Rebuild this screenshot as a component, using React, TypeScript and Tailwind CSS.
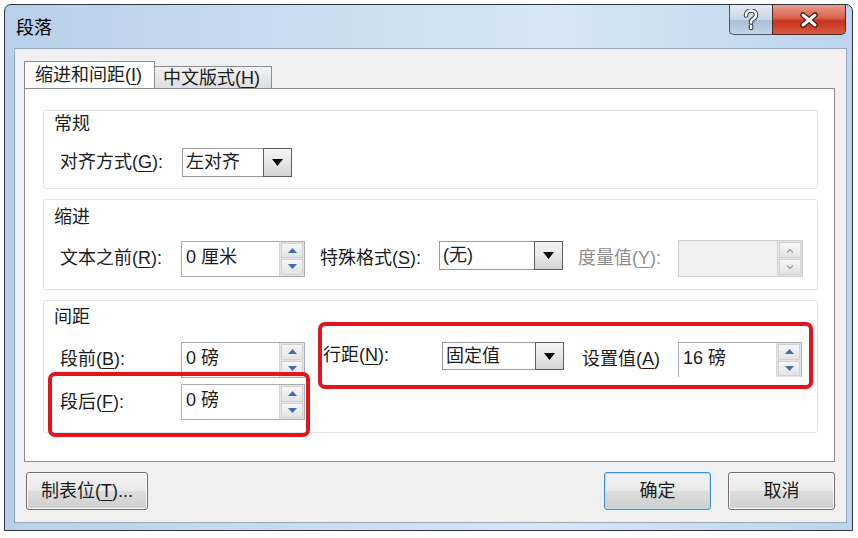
import React from 'react'

const UpTri = ({ disabled }: { disabled?: boolean }) =>
  disabled ? (
    <svg width="8" height="5" viewBox="0 0 8 5">
      <path d="M1 4.5 L4 1.5 L7 4.5" fill="none" stroke="#9a9a9a" strokeWidth="1.2" />
    </svg>
  ) : (
    <svg width="9" height="5" viewBox="0 0 9 5">
      <polygon points="0,5 4.5,0 9,5" fill="#3f6db0" />
    </svg>
  )

const DownTri = ({ disabled }: { disabled?: boolean }) =>
  disabled ? (
    <svg width="8" height="5" viewBox="0 0 8 5">
      <path d="M1 0.5 L4 3.5 L7 0.5" fill="none" stroke="#9a9a9a" strokeWidth="1.2" />
    </svg>
  ) : (
    <svg width="9" height="5" viewBox="0 0 9 5">
      <polygon points="0,0 9,0 4.5,5" fill="#3f6db0" />
    </svg>
  )

const Spin = ({ value, disabled }: { value?: string; disabled?: boolean }) => (
  <div
    className={
      disabled
        ? 'flex h-[37px] w-[125px] border border-[#cfcfcf] bg-[#f0f0f0]'
        : 'flex h-[36px] w-[124px] border border-[#abadb3] bg-white'
    }
  >
    <div className="flex-1 whitespace-nowrap pl-[4px] leading-[30px]">{value}</div>
    <div className="flex w-[25px] flex-col gap-[1px] border-l border-[#d6d6d6] bg-[#e4e4e4] p-[1px]">
      <div className="flex flex-1 items-center justify-center border border-[#d2d2d2] bg-gradient-to-b from-[#f7f7f7] to-[#e4e4e4]">
        <UpTri disabled={disabled} />
      </div>
      <div className="flex flex-1 items-center justify-center border border-[#d2d2d2] bg-gradient-to-b from-[#f7f7f7] to-[#e4e4e4]">
        <DownTri disabled={disabled} />
      </div>
    </div>
  </div>
)

const Combo = ({ value, className }: { value: string; className: string }) => (
  <div className={`flex ${className}`}>
    <div className="flex-1 whitespace-nowrap border border-r-0 border-[#9a9a9a] bg-white pl-[3px] leading-[26px]">
      {value}
    </div>
    <div className="flex w-[29px] items-center justify-center border border-[#5f5f5f] bg-gradient-to-b from-[#f4f4f4] via-[#e8e8e8] to-[#d3d3d3]">
      <svg width="11" height="7" viewBox="0 0 11 7">
        <polygon points="0,0 11,0 5.5,7" fill="#000" />
      </svg>
    </div>
  </div>
)

const Label = ({ children, className = '' }: { children: React.ReactNode; className?: string }) => (
  <div className={`whitespace-nowrap ${className}`}>{children}</div>
)

const U = ({ children }: { children: React.ReactNode }) => (
  <u className="decoration-[1px] underline-offset-[3px]">{children}</u>
)

const Group = ({ title, className, children }: { title: string; className: string; children: React.ReactNode }) => (
  <div className={`flex flex-col rounded-[3px] border border-[#dde3e8] pl-[10px] ${className}`}>
    <div className="leading-[24px]">{title}</div>
    {children}
  </div>
)

const WinButton = ({ children, focused, className }: { children: React.ReactNode; focused?: boolean; className: string }) => (
  <div
    className={`flex h-[38px] items-center justify-center rounded-[3px] border ${
      focused
        ? 'border-[#3c8fd0] shadow-[inset_0_0_0_1px_#b8def6]'
        : 'border-[#707070] shadow-[inset_0_0_0_1px_#fbfbfb]'
    } bg-[linear-gradient(#f3f3f3_0%,#ebebeb_48%,#dcdcdc_52%,#cfcfcf_100%)] ${className}`}
  >
    {children}
  </div>
)

export default function App() {
  return (
    <div className="h-[538px] w-[858px] bg-white pb-[7px] pl-[4px] pr-[5px] pt-[4px] font-['Liberation_Sans','Noto_Sans_CJK_SC',sans-serif] text-[18px] text-[#1b1b1b]">
      <div className="flex h-full flex-col rounded-t-[7px] border border-[#2f3540] bg-[linear-gradient(90deg,#b9d0ea,#cadcf0_35%,#d8e6f4_65%,#bcd4ee)]">
        {/* title bar */}
        <div className="flex h-[43px] items-start">
          <div className="pl-[11px] pt-[10px] leading-[26px] text-black">段落</div>
          <div className="ml-auto mr-[6px] flex h-[30px]">
            <div className="flex w-[43px] items-center justify-center rounded-bl-[5px] border border-t-0 border-r-0 border-[#4f5968] bg-[linear-gradient(#e4ebf4,#c9d6e5_50%,#a9bdd3_52%,#c3d4e6)]">
              <svg width="16" height="22" viewBox="0 0 16 22">
                <path
                  d="M3 6.5 C3 3 5.5 1.5 8 1.5 C11 1.5 13 3.3 13 6 C13 8.5 11 9.5 9.5 10.5 C8.5 11.2 8 12 8 13.5 M8 17 L8 19"
                  fill="none"
                  stroke="#3b4450"
                  strokeWidth="4.6"
                  strokeLinecap="round"
                />
                <path
                  d="M3 6.5 C3 3 5.5 1.5 8 1.5 C11 1.5 13 3.3 13 6 C13 8.5 11 9.5 9.5 10.5 C8.5 11.2 8 12 8 13.5 M8 17 L8 19"
                  fill="none"
                  stroke="#ffffff"
                  strokeWidth="2.4"
                  strokeLinecap="round"
                />
              </svg>
            </div>
            <div className="flex w-[74px] items-center justify-center rounded-br-[5px] border border-t-0 border-[#4f2a24] bg-[linear-gradient(#e99d8e,#d9604c_45%,#c7321f_55%,#d85a3e)]">
              <svg width="22" height="16" viewBox="0 0 22 16">
                <path d="M5 3 L17 13 M17 3 L5 13" stroke="#3a1610" strokeWidth="5.5" strokeLinecap="round" />
                <path d="M5 3 L17 13 M17 3 L5 13" stroke="#ffffff" strokeWidth="3" strokeLinecap="round" />
              </svg>
            </div>
          </div>
        </div>

        {/* client area */}
        <div className="mb-[7px] ml-[9px] mr-[5px] flex flex-1 flex-col border border-[#97a6b8] bg-[#f0f0f0] pb-[12px] pl-[9px] pr-[11px] pt-[13px]">
          {/* tabs */}
          <div className="relative z-10 flex h-[26px] items-end">
            <div className="h-[27px] w-[131px] border border-b-0 border-[#898c95] bg-white pl-[10px] leading-[26px]">
              缩进和间距(<U>I</U>)
            </div>
            <div className="h-[22px] w-[117px] border border-b-0 border-l-0 border-[#898c95] bg-gradient-to-b from-[#f2f2f2] to-[#dfdfdf] pl-[8px] leading-[22px]">
              中文版式(<U>H</U>)
            </div>
          </div>

          {/* panel */}
          <div className="relative flex h-[374px] flex-col gap-[10px] border border-[#898c95] bg-white pl-[18px] pr-[16px] pt-[21px]">
            <Group title="常规" className="h-[79px] pt-[1px]">
              <div className="ml-[6px] mt-[12px] flex items-center">
                <Label className="w-[122px]">
                  对齐方式(<U>G</U>):
                </Label>
                <Combo value="左对齐" className="h-[29px] w-[110px]" />
              </div>
            </Group>

            <Group title="缩进" className="h-[91px] pt-[5px]">
              <div className="ml-[6px] mt-[11px] flex items-center">
                <Label className="w-[121px]">
                  文本之前(<U>R</U>):
                </Label>
                <Spin value="0 厘米" />
                <Label className="ml-[15px] w-[119px]">
                  特殊格式(<U>S</U>):
                </Label>
                <div className="flex h-[36px] items-start">
                  <Combo value="(无)" className="h-[29px] w-[124px]" />
                </div>
                <Label className="ml-[15px] w-[100px] text-[#8d8d8d]">
                  度量值(<U>Y</U>):
                </Label>
                <Spin disabled />
              </div>
            </Group>

            <Group title="间距" className="h-[133px] pt-[4px]">
              <div className="ml-[6px] mt-[13px] flex items-start">
                <Label className="w-[121px] leading-[34px]">
                  段前(<U>B</U>):
                </Label>
                <Spin value="0 磅" />
                <Label className="ml-[18px] w-[119px] leading-[26px]">
                  行距(<U>N</U>):
                </Label>
                <Combo value="固定值" className="h-[28px] w-[122px]" />
                <Label className="ml-[18px] w-[96px] leading-[34px]">
                  设置值(<U>A</U>)
                </Label>
                <div className="h-[35px] overflow-hidden">
                  <Spin value="16 磅" />
                </div>
              </div>
              <div className="ml-[6px] mt-[6px] flex items-center">
                <Label className="w-[121px]">
                  段后(<U>F</U>):
                </Label>
                <Spin value="0 磅" />
              </div>
            </Group>

            {/* annotation boxes */}
            <div className="pointer-events-none absolute left-[23px] top-[283px] h-[65px] w-[262px] rounded-[7px] border-[4px] border-[#e3141a]" />
            <div className="pointer-events-none absolute left-[293px] top-[233px] h-[67px] w-[495px] rounded-[7px] border-[4px] border-[#e3141a]" />
          </div>

          {/* buttons */}
          <div className="mt-[10px] flex">
            <WinButton className="ml-[2px] w-[122px]">
              制表位(<U>T</U>)...
            </WinButton>
            <WinButton focused className="ml-auto w-[107px]">
              确定
            </WinButton>
            <WinButton className="ml-[17px] w-[107px]">取消</WinButton>
          </div>
        </div>
      </div>
    </div>
  )
}
